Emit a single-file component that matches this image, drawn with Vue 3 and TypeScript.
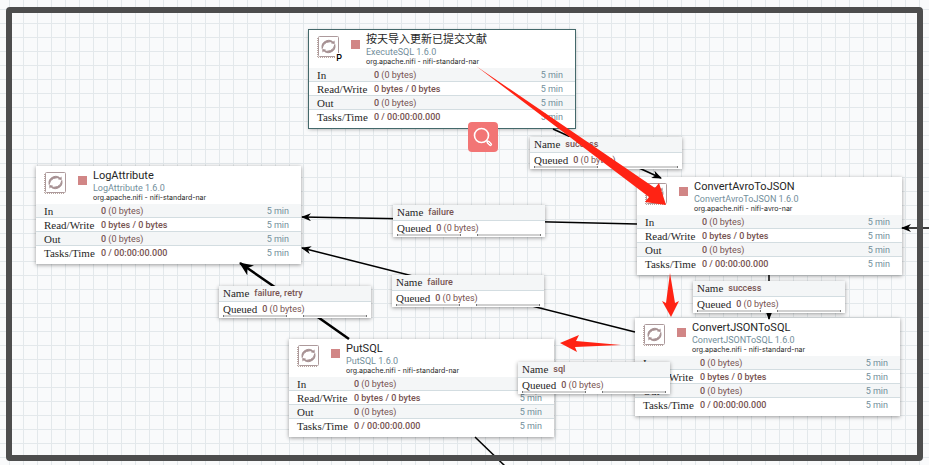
<script setup lang="ts">
interface Processor {
  id: string
  x: number
  y: number
  title: string
  type: string
  bundle: string
  primary?: boolean
}

interface Queue {
  id: string
  x: number
  y: number
  name: string
}

interface Link {
  points: string
  head: 'small' | 'large' | 'none'
}

const processors: Processor[] = [
  { id: 'execute', x: 309, y: 30, title: '按天导入更新已提交文献', type: 'ExecuteSQL 1.6.0', bundle: 'org.apache.nifi - nifi-standard-nar', primary: true },
  { id: 'log', x: 36, y: 166, title: 'LogAttribute', type: 'LogAttribute 1.6.0', bundle: 'org.apache.nifi - nifi-standard-nar' },
  { id: 'avro', x: 637, y: 177, title: 'ConvertAvroToJSON', type: 'ConvertAvroToJSON 1.6.0', bundle: 'org.apache.nifi - nifi-avro-nar' },
  { id: 'json', x: 635, y: 318, title: 'ConvertJSONToSQL', type: 'ConvertJSONToSQL 1.6.0', bundle: 'org.apache.nifi - nifi-standard-nar' },
  { id: 'put', x: 289, y: 339, title: 'PutSQL', type: 'PutSQL 1.6.0', bundle: 'org.apache.nifi - nifi-standard-nar' },
]

const stats = [
  { label: 'In', count: '0', detail: '(0 bytes)' },
  { label: 'Read/Write', count: '0 bytes / 0 bytes', detail: '' },
  { label: 'Out', count: '0', detail: '(0 bytes)' },
  { label: 'Tasks/Time', count: '0 / 00:00:00.000', detail: '' },
]

const queues: Queue[] = [
  { id: 'q1', x: 530, y: 137, name: 'success' },
  { id: 'q2', x: 393, y: 205, name: 'failure' },
  { id: 'q3', x: 392, y: 275, name: 'failure' },
  { id: 'q4', x: 219, y: 286, name: 'failure, retry' },
  { id: 'q5', x: 693, y: 281, name: 'success' },
  { id: 'q6', x: 518, y: 362, name: 'sql' },
]

const links: Link[] = [
  { points: '553,129 606,153 661,178', head: 'small' },
  { points: '637,224 469,220 302,217', head: 'small' },
  { points: '635,332 468,290 302,248', head: 'small' },
  { points: '349,339 295,301 240,263', head: 'large' },
  { points: '769,275 769,296 769,319', head: 'small' },
  { points: '940,228 902,228', head: 'small' },
  { points: '475,437 506,467', head: 'none' },
]

const annotations = [
  '476,66 655,188 659,183 666,205 645,202 649,197',
  '670,273 675,303 679,301 671,317 662,301 666,303',
  '621,345 576,341 579,335 560,343 577,352 575,347',
]
</script>

<template>
  <main class="canvas">
    <article
      v-for="p in processors"
      :key="p.id"
      class="processor"
      :class="{ selected: p.primary }"
      :style="{ left: p.x + 'px', top: p.y + 'px' }"
    >
      <header class="head">
        <div class="icon">
          <svg viewBox="0 0 24 24" width="24" height="24" aria-hidden="true">
            <rect x="2.500" y="1.500" width="20" height="20" rx="1" fill="#fff" stroke="#ad9a9c" />
            <path d="M1.500 3V23M2 22.500H21" fill="none" stroke="#b9a6a0" stroke-dasharray="1 1" />
            <path d="M6.200 13.500A6.600 6.600 0 0 1 18 8.200A7.400 7.400 0 0 0 6.200 13.500ZM18.800 9.500A6.600 6.600 0 0 1 7 14.800A7.400 7.400 0 0 0 18.800 9.500Z" fill="#a58f91" stroke="#a58f91" stroke-width="1" />
            <path d="M15 8.500L18.800 8.700L18.500 5.500ZM10 14.500L6.200 14.300L6.500 17.500Z" fill="#a58f91" />
          </svg>
          <span v-if="p.primary" class="primary">P</span>
        </div>
        <span class="stopped"></span>
        <div class="names">
          <h2>{{ p.title }}</h2>
          <p class="type">{{ p.type }}</p>
          <p class="bundle">{{ p.bundle }}</p>
        </div>
      </header>
      <table>
        <tbody>
          <tr v-for="s in stats" :key="s.label">
            <th scope="row">{{ s.label }}</th>
            <td><b>{{ s.count }}</b> {{ s.detail }}</td>
            <td class="window">5 min</td>
          </tr>
        </tbody>
      </table>
    </article>

    <svg class="overlay" aria-hidden="true">
      <defs>
        <marker id="small" markerUnits="userSpaceOnUse" markerWidth="10" markerHeight="8" refX="9" refY="4" orient="auto">
          <path d="M0 0L10 4L0 8L3 4Z" />
        </marker>
        <marker id="large" markerUnits="userSpaceOnUse" markerWidth="14" markerHeight="12" refX="13" refY="6" orient="auto">
          <path d="M0 0L14 6L0 12L4 6Z" />
        </marker>
      </defs>
      <polyline
        v-for="l in links"
        :key="l.points"
        :points="l.points"
        :class="['link', l.head]"
        :marker-end="l.head === 'none' ? undefined : `url(#${l.head})`"
      />
    </svg>

    <section
      v-for="q in queues"
      :key="q.id"
      class="queue"
      :style="{ left: q.x + 'px', top: q.y + 'px' }"
    >
      <div class="line name"><span class="key">Name</span><b>{{ q.name }}</b></div>
      <div class="line"><span class="key">Queued</span><span><b>0</b> (0 bytes)</span></div>
      <div class="gauges"><i></i><i></i></div>
    </section>

    <div class="frame"></div>

    <svg class="overlay" aria-hidden="true">
      <polygon v-for="a in annotations" :key="a" :points="a" fill="#ff2314" />
    </svg>

    <button class="search" type="button" aria-label="Search">
      <svg viewBox="0 0 30 30" width="30" height="30" aria-hidden="true">
        <circle cx="13.500" cy="13.500" r="7" fill="none" stroke="#fff" stroke-width="1.600" />
        <path d="M18.500 18.500L20 20" stroke="#fff" stroke-width="1.600" />
        <path d="M20.200 20.200L22.400 22.400" stroke="#fff" stroke-width="3.400" stroke-linecap="round" />
        <path d="M20.500 20.500L22.200 22.200" stroke="#f27a7a" stroke-width="1" stroke-linecap="round" />
      </svg>
    </button>
  </main>
</template>

<style>
body {
  margin: 0;
}
</style>

<style scoped>
.canvas {
  position: relative;
  min-height: 100vh;
  overflow: hidden;
  background-color: #f9fafb;
  background-image:
    linear-gradient(to right, #e3e8eb 1px, transparent 1px),
    linear-gradient(to bottom, #e3e8eb 1px, transparent 1px);
  background-size: 14px 14px;
  background-position: 9px 9px;
  font-family: Roboto, "Noto Sans CJK SC", sans-serif;
  font-size: 9px;
  color: #775351;
}

.processor {
  position: absolute;
  width: 265px;
  box-sizing: border-box;
  padding-bottom: 5px;
  background: #fff;
  box-shadow: 0 1px 4px rgba(0, 0, 0, 0.4);
}

.selected {
  width: 266px;
  outline: 1px solid #44696b;
}

.head {
  display: flex;
  height: 38px;
  padding-left: 7px;
}

.icon {
  position: relative;
  width: 24px;
  height: 24px;
  padding-top: 5px;
}

.icon svg {
  display: block;
}

.primary {
  position: absolute;
  right: -3px;
  bottom: -4px;
  padding: 0 1px;
  background: #fff;
  color: #000;
  font-size: 9px;
  font-weight: 500;
  line-height: 10px;
}

.stopped {
  width: 9px;
  height: 9px;
  margin: 10px 6px 0 11px;
  background: #d18686;
}

.names {
  padding-top: 3px;
  white-space: nowrap;
}

.names h2,
.names p {
  margin: 0;
  font-weight: 400;
}

.names h2 {
  font-size: 11px;
  line-height: 14px;
  color: #262626;
}

.names .type {
  font-size: 9px;
  line-height: 11px;
  color: #728e9b;
}

.names .bundle {
  font-family: Inter, sans-serif;
  font-size: 7px;
  line-height: 8px;
  color: #262626;
}

table {
  width: 100%;
  border-collapse: collapse;
  table-layout: fixed;
}

th,
td {
  height: 12px;
  padding: 1px 0 0;
  border-bottom: 1px solid #d3dde1;
  line-height: 12px;
  text-align: left;
  white-space: nowrap;
}

tr:last-child > * {
  border-bottom: 0;
}

tr:nth-child(odd) {
  background: #f4f6f7;
}

th {
  width: 57px;
  padding-left: 8px;
  font-family: "Liberation Serif", serif;
  font-size: 11px;
  font-weight: 400;
  color: #262626;
}

b {
  font-weight: 500;
}

.window {
  width: 40px;
  padding-right: 12px;
  text-align: right;
  color: #728e9b;
}

.overlay {
  position: absolute;
  inset: 0;
  width: 100%;
  height: 100%;
  pointer-events: none;
}

.link {
  fill: none;
  stroke: #000;
  stroke-width: 1.500;
}

.link.large {
  stroke-width: 2.500;
}

.queue {
  position: absolute;
  width: 152px;
  background: #fff;
  box-shadow: 0 1px 4px rgba(0, 0, 0, 0.4);
}

.line {
  display: flex;
  gap: 5px;
  padding-left: 4px;
  line-height: 14px;
  white-space: nowrap;
}

.name {
  line-height: 15px;
  background: #f4f6f7;
  border-bottom: 1px solid #d3dde1;
}

.key {
  font-family: "Liberation Serif", serif;
  font-size: 11px;
  color: #262626;
}

.gauges {
  display: flex;
  justify-content: space-between;
  margin-top: -1px;
  padding: 0 4px 1px;
}

.gauges i {
  box-sizing: border-box;
  width: 64px;
  height: 2px;
  border: solid #777;
  border-width: 0 1px;
  background: #d0d0d0;
}

.frame {
  position: absolute;
  inset: 7px 6px 4px 6px;
  border: 6px solid #4d4d4d;
  border-radius: 4px;
  pointer-events: none;
}

.search {
  position: absolute;
  left: 468px;
  top: 122px;
  width: 30px;
  height: 30px;
  padding: 0;
  border: 0;
  border-radius: 4px;
  background: #f27575;
  cursor: pointer;
}

.search svg {
  display: block;
}
</style>
